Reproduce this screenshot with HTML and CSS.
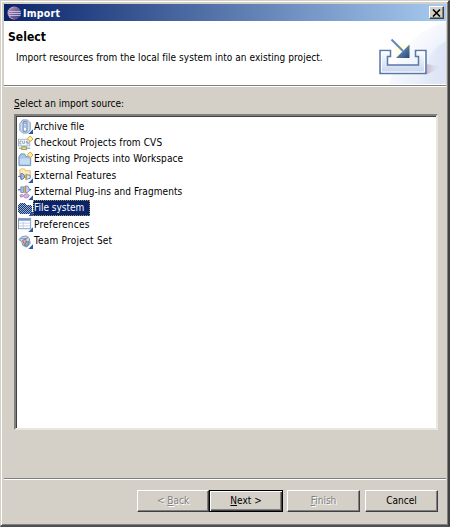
FILE: index.html
```html
<!DOCTYPE html>
<html lang="en">
<head>
<meta charset="utf-8">
<title>Import</title>
<link rel="stylesheet" href="styles.css">
</head>
<body>
<main class="window">
  <header class="titlebar">
    <svg class="logo" width="14" height="14" viewBox="0 0 14 14"><defs><linearGradient id="orb" x2="1" y2="1"><stop stop-color="#b28fbb"/><stop offset="1" stop-color="#353379"/></linearGradient></defs><circle cx="7" cy="7" r="6.5" fill="#c49bba"/><circle cx="8" cy="7" r="6" fill="url(#orb)"/><path d="M2 5.500h11.5M2 7.500h12M2 9.500h11.5" stroke="#d6d2ec" stroke-width=".8"/></svg>
    <h1>Import</h1>
    <button class="close" aria-label="Close"><svg width="9" height="8" viewBox="0 0 9 8"><path d="M1 .5l7 7M8 .5l-7 7" stroke="#000" stroke-width="1.6"/></svg></button>
  </header>
  <section class="banner">
    <div class="intro">
      <h2>Select</h2>
      <p>Import resources from the local file system into an existing project.</p>
    </div>
    <svg class="art" width="76" height="62" viewBox="0 0 76 62">
      <defs>
        <linearGradient id="sky" x2="1" y2="1"><stop offset=".25" stop-color="#fff"/><stop offset="1" stop-color="#dde5f6"/></linearGradient>
        <linearGradient id="tray" x2="0" y2="1"><stop stop-color="#fff"/><stop offset="1" stop-color="#c7d4eb"/></linearGradient>
        <linearGradient id="arrow" x2="1" y2="1"><stop stop-color="#8db0dc"/><stop offset="1" stop-color="#234579"/></linearGradient>
        <linearGradient id="shade"><stop stop-color="#c7b5c6"/><stop offset="1" stop-color="#e3e5f3" stop-opacity="0"/></linearGradient>
        <linearGradient id="haze" x1="0" x2="1"><stop stop-color="#dce4f6" stop-opacity="0"/><stop offset="1" stop-color="#dce4f6"/></linearGradient>
      </defs>
      <path d="M76 0C49 7 29 25 19 62H76Z" fill="url(#sky)"/>
      <path d="M76 20Q60 24 48 62H76Z" fill="url(#haze)"/>
      <path d="M56 51.500L57 42 72 45 58 52Z" fill="url(#shade)"/>
      <path d="M25 22H40V35H25Z" fill="#fffbd0" opacity=".6"/>
      <path d="M10 28.500H20.500V34.500H17.500V43H48.500V34.500H45.500V28.500H56V51.500H10Z" fill="url(#tray)" stroke="#5877aa" stroke-width="1.500"/>
      <path d="M11.500 50V30H19M47 30H54.500V50H11.500" fill="none" stroke="#fff" stroke-width="1"/>
      <path d="M21.500 17.500L33 29" stroke="#6385b7" stroke-width="2"/>
      <path d="M39.500 22.500V36H26Z" fill="url(#arrow)"/>
    </svg>
  </section>
  <section class="content">
    <div class="label"><u>S</u>elect an import source:</div>
    <ul class="sources">
      <li><svg viewBox="0 0 16 16"><path d="M2 5L5 1H10L13 4V12L10 15H5L2 12Z" fill="#cfdcf0" stroke="#7995bd"/><path d="M5.500 3H9.500V13H5.500Z" fill="#fff" stroke="#4f78b2"/><path d="M7.500 2V9" stroke="#6687b5" stroke-dasharray="1 1" stroke-width="2"/><path d="M16 11V16H11Z" fill="#245aa5"/></svg><span class="archive">Archive file</span></li>
      <li><svg viewBox="0 0 16 16"><rect x=".5" y="3.500" width="12" height="7" fill="#fafcff" stroke="#9cb4ce"/><path d="M4 5.500H2V8.500H4M5 5V7.500L6 8.500 7 7.500V5M11 5.500H9V7H11V8.500H9" fill="none" stroke="#71869e" stroke-width=".8"/><path d="M6.500 11V14M1 13H13" stroke="#6086b0"/><rect x="4" y="11.500" width="5" height="3" fill="#d9d990" stroke="#929f57"/><path d="M13 0L16 3.200 13 6 10 3Z" fill="#fff2a0" stroke="#d59b30"/></svg><span class="cvs">Checkout Projects from CVS</span></li>
      <li><svg viewBox="0 0 16 16"><path d="M1 5L3 2H7L8.500 5H13.500V14.500H1Z" fill="#a7c6e9" stroke="#6b90b9"/><path d="M2 7H12.500V13H2Z" fill="#c5dcf3"/><path d="M13 0L16 3.200 13 6 10 3Z" fill="#fff2a0" stroke="#d59b30"/></svg><span class="existing">Existing Projects into Workspace</span></li>
      <li><svg viewBox="0 0 16 16"><path d="M2 6V2L3 1H7L8 3H13V10H2Z" fill="#ffedb9" stroke="#e0b56d"/><path d="M0 9H3M3 6H5L7 8V10L5 12H3Z" fill="#9eb8de" stroke="#5475ad"/><path d="M9 7L13 8V11L9 12Z" fill="#dce5f6" stroke="#7187b8"/><path d="M8.500 6V13" stroke="#dc9d36" stroke-width="1.500"/><path d="M16 11V16H11Z" fill="#245aa5"/></svg><span class="features">External Features</span></li>
      <li><svg viewBox="0 0 16 16"><path d="M0 5H14" stroke="#587db2" stroke-width="1.500"/><path d="M3 2H6V8H3Z" fill="#a8bfe5" stroke="#7391be"/><path d="M8 1H10L12 4V6L10 8H8Z" fill="#bdcdec" stroke="#6687b9"/><path d="M7 1V9" stroke="#e5ad4e" stroke-width="1.500"/><path d="M2 11L5 10 6 11 9 9 12 11 11 13 8 14 6 12 3 13Z" fill="#d5b2e0" stroke="#ab83bb"/><path d="M16 11V16H11Z" fill="#245aa5"/></svg><span class="plugins">External Plug-ins and Fragments</span></li>
      <li class="selected"><svg viewBox="0 0 15 15" shape-rendering="crispEdges"><defs><pattern id="dots" width="2" height="2" patternUnits="userSpaceOnUse"><rect width="2" height="2" fill="#9cb1cc"/><path d="M0 0H1V1H0ZM1 1H2V2H1Z" fill="#173777"/></pattern></defs><path d="M0 4L2 2H6L8 4H12L14 6V11L12 13H2L0 11Z" fill="url(#dots)"/><path d="M15 10V15H10Z" fill="#245aa5"/></svg><span class="files">File system</span></li>
      <li><svg viewBox="0 0 16 16"><rect x=".5" y="1.500" width="13" height="11" fill="#fff" stroke="#8198bd"/><path d="M1 3H13" stroke="#7897c8" stroke-width="2"/><path d="M1 6.500H13M1 9.500H13M5.500 5V12" stroke="#bcccdf"/><path d="M16 11V16H11Z" fill="#245aa5"/></svg><span class="prefs">Preferences</span></li>
      <li><svg viewBox="0 0 16 16"><path d="M1 6L4 3 9 2 12 5 13 10 9 14 5 12 4 8Z" fill="#d1ddeb" stroke="#748fad"/><path d="M2 5L10 5M4 8L11 3M6 12L12 7" stroke="#6a93bd"/><path d="M5 7L8 5 9 9 7 12Z" fill="#e6a5a3" stroke="#a66c71"/><path d="M9 8L12 9 10 13 7 12Z" fill="#8eb5c8" stroke="#597c96"/><path d="M16 11V16H11Z" fill="#245aa5"/></svg><span class="team">Team Project Set</span></li>
    </ul>
  </section>
  <footer>
    <div class="pair"><button class="button disabled back">&lt; <u>B</u>ack</button><button class="button default"><u>N</u>ext &gt;</button></div>
    <button class="button disabled"><u>F</u>inish</button>
    <button class="button">Cancel</button>
  </footer>
</main>
</body>
</html>
```
FILE: styles.css
```css
* { box-sizing: border-box; }
body { margin: 0; width: 450px; height: 527px; overflow: hidden; font: 10px/16px "DejaVu Sans Condensed", "DejaVu Sans", sans-serif; font-stretch: condensed; color: #000; }
h1, h2, p, ul { margin: 0; padding: 0; }
button { font: inherit; padding: 0; border-radius: 0; }
.window { height: 527px; display: flex; flex-direction: column; background: #d4d0c8; border: 1px solid #d4d0c8; border-right: 2px solid #404040; border-bottom: 2px solid #505050; box-shadow: inset 1px 1px #fff, inset -1px -1px #808080; padding: 3px 2px 2px 3px; }
.titlebar { height: 17px; flex: none; display: flex; align-items: center; padding: 0 2px 0 3px; background: linear-gradient(90deg, #0a246a, #a6caf0); }
.titlebar h1 { flex: 1; margin-left: 2px; color: #fff; font-size: 10.5px; letter-spacing: .25px; }
.close { width: 15px; height: 13px; display: flex; align-items: center; justify-content: center; background: #d4d0c8; border: 1px solid; border-color: #fff #404040 #404040 #fff; box-shadow: inset -1px -1px #808080; }
.banner { height: 65px; flex: none; display: flex; background: #fff; border-bottom: 1px solid #808080; box-shadow: 0 1px #fff; overflow: hidden; }
.intro { flex: 1; padding: 8px 0 0 4px; white-space: nowrap; }
.intro h2 { font-size: 12px; line-height: 17px; letter-spacing: .05px; }
.intro p { margin: 4px 0 0 8px; letter-spacing: .06px; }
.art { margin-top: 1px; }
.content { flex: 1; padding: 10px 8px 0 10px; }
.label { height: 18px; }
u { text-decoration-thickness: 1px; text-underline-offset: 1px; }
.sources { list-style: none; width: 424px; height: 316px; padding: 2.5px 0 0 2px; background: #fff; border: 2px solid; border-color: #808080 #e8e6e0 #e8e6e0 #808080; box-shadow: inset 1px 1px #404040; }
.sources li { height: 16.35px; display: flex; align-items: center; white-space: nowrap; }
.sources svg { width: 15px; height: 15px; flex: none; }
.sources span { height: 16px; padding: 0 1px; }
.cvs { letter-spacing: .12px; }
.existing { letter-spacing: .1px; }
.features { letter-spacing: .22px; }
.plugins { letter-spacing: .08px; }
.prefs { letter-spacing: .25px; }
.team { letter-spacing: .22px; }
.selected span { width: 57px; color: #fff; background: #0a246a; outline: 1px dotted #a68b55; outline-offset: -1px; }
footer { height: 45px; flex: none; display: flex; gap: 5px; justify-content: flex-end; padding: 11px 8px 0 0; border-top: 1px solid #808080; box-shadow: inset 0 1px #fff; }
.pair { display: flex; margin-right: -1px; }
.button { width: 73px; height: 22px; color: #000; background: #d4d0c8; border: 1px solid; border-color: #fff #404040 #404040 #fff; box-shadow: inset -1px -1px #808080; }
.back { width: 72px; }
.disabled { color: #808080; text-shadow: 1px 1px #fff; }
.default { width: 74px; border: 1px solid #000; box-shadow: inset 1px 1px #fff, inset -1px -1px #404040, inset -2px -2px #808080; }
```
